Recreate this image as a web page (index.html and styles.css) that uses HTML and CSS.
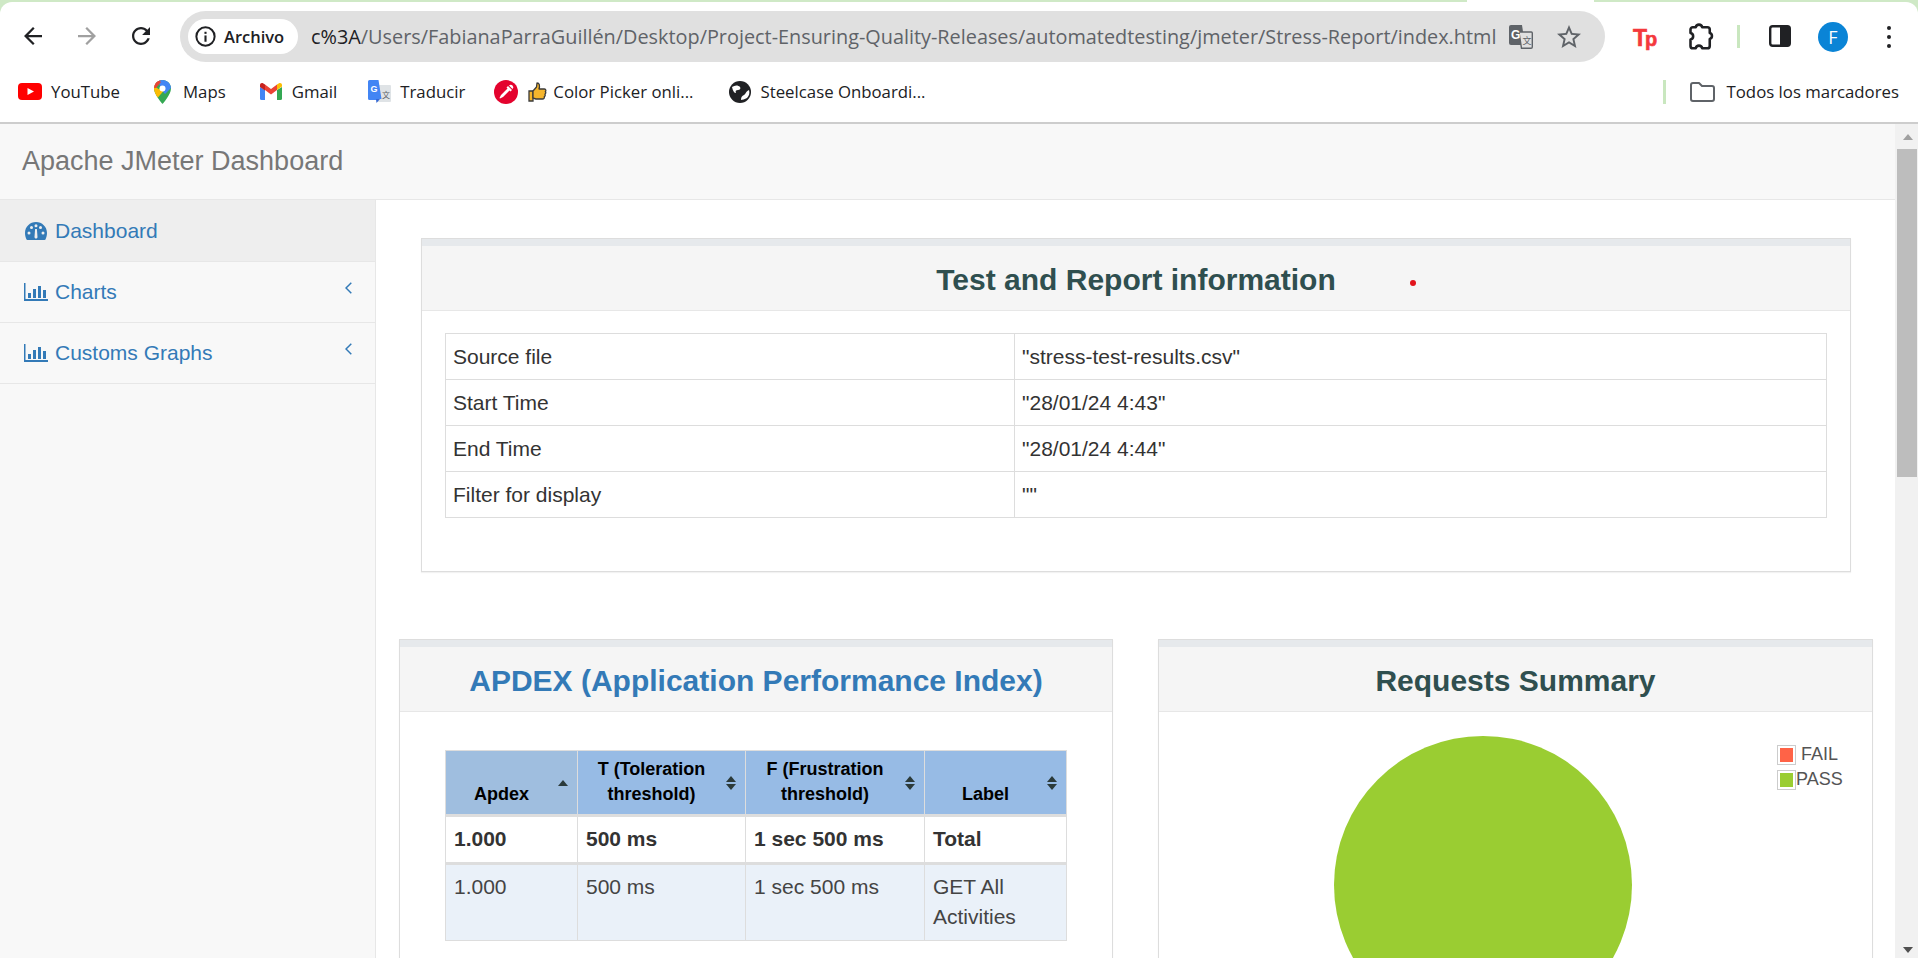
FILE: index.html
```html
<!DOCTYPE html>
<html>
<head>
    <title>Apache JMeter Dashboard</title>
    <link rel="stylesheet" href="styles.css">
</head>
<body>
    <!-- browser frame -->
    <div class="browser">
        <div class="tabstrip">
            <div class="tabstrip-gap"></div>
        </div>
        <div class="toolbar">
            <svg class="nav-icon" viewBox="4 4 16 16"><path fill="#202124" d="M20 11H7.83l5.59-5.59L12 4l-8 8 8 8 1.41-1.41L7.83 13H20v-2z"/></svg>
            <svg class="nav-icon" viewBox="4 4 16 16"><path fill="#a0a0a0" d="M4 11h12.17l-5.59-5.59L12 4l8 8-8 8-1.41-1.41L16.17 13H4v-2z"/></svg>
            <svg class="nav-icon" viewBox="4 4 16 16"><path fill="#202124" d="M17.65 6.35C16.2 4.9 14.21 4 12 4c-4.42 0-7.99 3.58-7.99 8s3.57 8 7.99 8c3.73 0 6.84-2.55 7.73-6h-2.08c-.82 2.33-3.04 4-5.65 4-3.31 0-6-2.69-6-6s2.69-6 6-6c1.66 0 3.14.69 4.22 1.78L13 11h7V4l-2.35 2.35z"/></svg>
            <div class="omnibox">
                <div class="chip">
                    <svg class="chip-icon" viewBox="0 0 20 20"><circle cx="10" cy="10" r="8.7" fill="none" stroke="#202124" stroke-width="1.9"/><rect x="9" y="9" width="2" height="6" fill="#202124"/><rect x="9" y="5.5" width="2" height="2" fill="#202124"/></svg>
                    <span>Archivo</span>
                </div>
                <div class="url"><span class="url-host">c%3A</span>/Users/FabianaParraGuillén/Desktop/Project-Ensuring-Quality-Releases/automatedtesting/jmeter/Stress-Report/index.html</div>
                <svg class="translate-icon" viewBox="0 0 24 24">
                    <path fill="#5f6368" d="M2 0h11l3 20H2a2 2 0 0 1-2-2V2a2 2 0 0 1 2-2z"/>
                    <path fill="#e0e0e0" stroke="#5f6368" stroke-width="1.4" d="M10 7h12.3a1 1 0 0 1 1 1v14a1.3 1.3 0 0 1-1.3 1.3H12.5z"/>
                    <text x="2" y="14" class="translate-g">G</text>
                    <text x="13.5" y="19" class="translate-x">文</text>
                </svg>
                <svg class="star-icon" viewBox="2 2 20 19"><path fill="#5f6368" d="M22 9.24l-7.19-.62L12 2 9.19 8.63 2 9.24l5.46 4.73L5.82 21 12 17.27 18.18 21l-1.63-7.03L22 9.24zM12 15.4l-3.76 2.27 1-4.28-3.32-2.88 4.38-.38L12 6.1l1.71 4.04 4.38.38-3.32 2.88 1 4.28L12 15.4z"/></svg>
            </div>
            <span class="tp-logo">T<span class="tp-p">p</span></span>
            <svg class="puzzle-icon" viewBox="0 0 24 24"><path fill="none" stroke="#202124" stroke-width="2.2" stroke-linejoin="round" d="M5 4.5H7.5a2.8 2.8 0 0 1 5.5 0H17.5a2 2 0 0 1 2 2V9.5a2.600 2.600 0 0 1 0 5V20.5a2 2 0 0 1-2 2H13a2.800 2.800 0 0 0-5.500 0H5a2 2 0 0 1-2-2V15a2.800 2.800 0 0 0 0-5.500V6.500a2 2 0 0 1 2-2z"/></svg>
            <div class="toolbar-sep"></div>
            <svg class="panel-icon" viewBox="0 0 22 22"><rect x="1.2" y="1.2" width="19.6" height="19.6" rx="2.5" fill="none" stroke="#202124" stroke-width="2.4"/><rect x="11" y="1" width="10" height="20" fill="#202124"/></svg>
            <div class="avatar">F</div>
            <div class="menu-dots"><i></i><i></i><i></i></div>
        </div>
        <div class="bookmarks">
            <div class="bookmark bm-youtube">
                <svg class="bm-icon" width="24" height="17" viewBox="0 0 24 17"><rect width="24" height="17" rx="4" fill="#f00"/><path fill="#fff" d="M9.5 5l6.5 3.5-6.5 3.5z"/></svg>
                <span>YouTube</span>
            </div>
            <div class="bookmark bm-maps">
                <svg class="bm-icon" width="17" height="24" viewBox="0 0 17 24">
                    <clipPath id="pin"><path d="M8.5 0C3.8 0 0 3.8 0 8.5c0 6 8.500 15.500 8.500 15.500S17 14.500 17 8.500C17 3.800 13.200 0 8.500 0z"/></clipPath>
                    <g clip-path="url(#pin)">
                        <rect width="17" height="24" fill="#34a853"/>
                        <path fill="#fbbc04" d="M0 6l6 4-4 8-2-3z"/>
                        <path fill="#fbbc04" d="M2 13l4.5-5 3 3-6 7z"/>
                        <path fill="#4285f4" d="M4 0h13v8l-6 6-4-5z"/>
                        <path fill="#ea4335" d="M0 6l7-6-2-1-5 2z"/>
                        <path fill="#ea4335" d="M0 8V3l4-3 3 2-5 6z"/>
                    </g>
                    <circle cx="8.5" cy="8.5" r="3" fill="#fff"/>
                </svg>
                <span>Maps</span>
            </div>
            <div class="bookmark bm-gmail">
                <svg class="bm-icon" width="22" height="17" viewBox="0 0 22 17">
                    <path fill="#4285f4" d="M0 4v11.5A1.5 1.5 0 0 0 1.5 17H5V7z"/>
                    <path fill="#34a853" d="M17 7v10h3.5a1.5 1.5 0 0 0 1.5-1.5V4z"/>
                    <path fill="#ea4335" d="M5 7l6 4.5L17 7V1.5L11 6 5 1.5z"/>
                    <path fill="#c5221f" d="M0 4l5 3.5V1.5L3 .3C1.6-.5 0 .5 0 2z"/>
                    <path fill="#fbbc04" d="M17 1.5V7l5-3.5V2c0-1.5-1.6-2.5-3-1.7z"/>
                </svg>
                <span>Gmail</span>
            </div>
            <div class="bookmark bm-translate">
                <svg class="bm-icon" width="23" height="24" viewBox="0 0 23 24">
                    <rect x="8" y="5" width="15" height="17" rx="1" fill="#dfe3e6"/>
                    <path fill="#4285f4" d="M1.5 0h9l3 19H10l-1 1H1.5A1.5 1.5 0 0 1 0 18.5v-17A1.5 1.5 0 0 1 1.5 0z"/>
                    <path fill="#3367d6" d="M8 19h4l-3.5 4z"/>
                    <text x="2.5" y="12" class="bm-translate-g">G</text>
                    <text x="14" y="18" class="bm-translate-x">文</text>
                </svg>
                <span>Traducir</span>
            </div>
            <div class="bookmark bm-picker">
                <svg class="bm-icon" width="24" height="24" viewBox="0 0 24 24">
                    <circle cx="12" cy="12" r="12" fill="#e4032e"/>
                    <path fill="#fff" d="M14 6l4 4-1.5 1.5-1-1L9 17l-3 1.5-.5-.5L7 15l6.5-6.5-1-1z"/>
                    <path fill="#fff" d="M15 5.5a2 2 0 0 1 3.5 3.5z"/>
                </svg>
                <svg class="bm-thumb" width="19" height="20" viewBox="0 0 19 20">
                    <path fill="#f5b52c" stroke="#3a3a3a" stroke-width="1.3" d="M1 9h4v10H1z"/>
                    <path fill="#f5b52c" stroke="#3a3a3a" stroke-width="1.3" stroke-linejoin="round" d="M5 9l3.5-4 .5-4c2.5 0 3 2.5 2 6h5.5c1.5 0 1.8 2 .8 2.5.8.8.6 2.3-.4 2.7.6.9.3 2.2-.6 2.5.3 1.2-.4 2.3-1.8 2.3H8c-1.5 0-2-1-3-1z"/>
                </svg>
                <span>Color Picker onli...</span>
            </div>
            <div class="bookmark bm-steelcase">
                <svg class="bm-icon" width="22" height="22" viewBox="0 0 22 22">
                    <circle cx="11" cy="11" r="11" fill="#202124"/>
                    <path fill="#fff" d="M3 6c3-2 6-2 8 0 1 1 0 3-2 3-2 0-3 1-2 3-2 0-3-2-4-6z"/>
                    <path fill="#fff" d="M20 9c1 3 0 6-2 8-2 1-5 2-6 2 0-3 1-4 3-5s1-3 5-5z"/>
                </svg>
                <span>Steelcase Onboardi...</span>
            </div>
            <div class="bm-sep"></div>
            <div class="bookmark bm-all">
                <svg class="bm-icon" width="25" height="20" viewBox="0 0 25 20"><path fill="none" stroke="#5f6368" stroke-width="2" stroke-linejoin="round" d="M1 3a2 2 0 0 1 2-2h6l3 3h10a2 2 0 0 1 2 2v11a2 2 0 0 1-2 2H3a2 2 0 0 1-2-2z"/></svg>
                <span>Todos los marcadores</span>
            </div>
        </div>
    </div>

    <div class="viewport">
        <div class="page">
            <div class="navbar">Apache JMeter Dashboard</div>
            <div class="wrapper">
                <div class="sidebar">
                    <div class="side-item active">
                        <svg class="side-icon" width="24" height="18" viewBox="-1 0 24 18"><path fill="#337ab7" fill-rule="evenodd" d="M11 0C5 0 0 4.700 0 11c0 2.500.7 4.800 1.500 6.500.2.300.5.500.9.500h17.200c.4 0 .7-.2.900-.5.800-1.700 1.500-4 1.500-6.500C22 4.700 17 0 11 0zM4 9.500a1.500 1.500 0 1 1 0 3 1.500 1.500 0 0 1 0-3zM6.500 4a1.500 1.500 0 1 1 0 3 1.500 1.500 0 0 1 0-3zM11 2.200a1.500 1.500 0 1 1 0 3 1.500 1.500 0 0 1 0-3zM15.500 4a1.500 1.500 0 1 1 0 3 1.500 1.500 0 0 1 0-3zM18 9.500a1.500 1.500 0 1 1 0 3 1.500 1.500 0 0 1 0-3zM9.500 15l.6-8h1.800l.6 8c0 1-1 1.500-1.500 1.500S9.500 16 9.500 15z"/></svg>
                        <span>Dashboard</span>
                    </div>
                    <div class="side-item">
                        <svg class="side-icon" width="24" height="18" viewBox="0 0 24 18"><path fill="#337ab7" d="M0 0h1.500v16H24v2H0z"/><path fill="#337ab7" d="M4 10h3v5H4zM9 6h3v9H9zM14 3h3v12h-3zM19 7h3v8h-3z"/></svg>
                        <span>Charts</span>
                        <svg class="side-arrow" width="7" height="12" viewBox="0 0 7 12"><path fill="none" stroke="#337ab7" stroke-width="1.5" d="M6.300.7L1 6l5.300 5.300"/></svg>
                    </div>
                    <div class="side-item">
                        <svg class="side-icon" width="24" height="18" viewBox="0 0 24 18"><path fill="#337ab7" d="M0 0h1.500v16H24v2H0z"/><path fill="#337ab7" d="M4 10h3v5H4zM9 6h3v9H9zM14 3h3v12h-3zM19 7h3v8h-3z"/></svg>
                        <span>Customs Graphs</span>
                        <svg class="side-arrow" width="7" height="12" viewBox="0 0 7 12"><path fill="none" stroke="#337ab7" stroke-width="1.5" d="M6.300.7L1 6l5.300 5.300"/></svg>
                    </div>
                </div>
                <div class="content">
                    <div class="panel panel-info">
                        <div class="panel-heading">
                            Test and Report information
                            <span class="red-dot"></span>
                        </div>
                        <div class="panel-body info-body">
                            <table class="info-table">
                                <tr><td class="info-key">Source file</td><td>"stress-test-results.csv"</td></tr>
                                <tr><td class="info-key">Start Time</td><td>"28/01/24 4:43"</td></tr>
                                <tr><td class="info-key">End Time</td><td>"28/01/24 4:44"</td></tr>
                                <tr><td class="info-key">Filter for display</td><td>""</td></tr>
                            </table>
                        </div>
                    </div>
                    <div class="panel-row">
                        <div class="panel">
                            <div class="panel-heading heading-link">APDEX (Application Performance Index)</div>
                            <div class="panel-body apdex-body">
                                <table class="apdex-table">
                                    <thead>
                                        <tr>
                                            <th class="col-apdex sort-up">Apdex</th>
                                            <th class="col-t sort-both">T (Toleration threshold)</th>
                                            <th class="col-f sort-both">F (Frustration threshold)</th>
                                            <th class="col-label sort-both">Label</th>
                                        </tr>
                                    </thead>
                                    <tbody>
                                        <tr class="row-total">
                                            <td>1.000</td><td>500 ms</td><td>1 sec 500 ms</td><td>Total</td>
                                        </tr>
                                        <tr class="row-item">
                                            <td>1.000</td><td>500 ms</td><td>1 sec 500 ms</td><td>GET All Activities</td>
                                        </tr>
                                    </tbody>
                                </table>
                            </div>
                        </div>
                        <div class="panel">
                            <div class="panel-heading">Requests Summary</div>
                            <div class="panel-body pie-body">
                                <div class="pie"></div>
                                <div class="legend">
                                    <div class="legend-row"><span class="swatch"><i class="swatch-fail"></i></span><span class="legend-fail">FAIL</span></div>
                                    <div class="legend-row"><span class="swatch"><i class="swatch-pass"></i></span><span>PASS</span></div>
                                </div>
                            </div>
                        </div>
                    </div>
                </div>
            </div>
        </div>
        <div class="scrollbar">
            <div class="scroll-up"></div>
            <div class="scroll-thumb"></div>
            <div class="scroll-track"></div>
            <div class="scroll-down"></div>
        </div>
    </div>
</body>
</html>
```
FILE: styles.css
```css
* {
    box-sizing: border-box;
}
html, body {
    height: 100%;
}
body {
    margin: 0;
    height: 958px;
    overflow: hidden;
    display: flex;
    flex-direction: column;
    font-family: "Liberation Sans", Arial, sans-serif;
    font-size: 21px;
    color: #333;
    background-color: #fff;
}

/* browser frame */
.browser {
    flex: none;
    height: 124px;
    background-color: #cfe9c6;
    border-bottom: 2px solid #cdcdcd;
    font-family: "Open Sans", sans-serif;
}
.tabstrip {
    height: 2px;
    padding-left: 1467px;
}
.tabstrip-gap {
    width: 127px;
    height: 2px;
    background-color: #fff;
}
.toolbar {
    height: 63px;
    padding-top: 9px;
    padding-left: 24px;
    background-color: #fff;
    border-radius: 12px 12px 0 0;
    display: flex;
    align-items: flex-start;
}
.nav-icon {
    width: 18px;
    height: 18px;
    margin-top: 16px;
    margin-right: 36px;
    flex: none;
}
.omnibox {
    width: 1425px;
    height: 51px;
    margin-left: -6px;
    padding-left: 8px;
    background-color: #e0e0e0;
    border-radius: 26px;
    display: flex;
    align-items: center;
    flex: none;
}
.chip {
    width: 110px;
    height: 35px;
    padding-left: 7px;
    background-color: #fff;
    border-radius: 18px;
    display: flex;
    align-items: center;
    font-size: 16.5px;
    font-weight: 600;
    color: #202124;
    flex: none;
}
.chip-icon {
    width: 21px;
    height: 21px;
    margin-right: 8px;
    flex: none;
}
.url {
    width: 1198px;
    margin-left: 13px;
    font-size: 19.85px;
    color: #5f6368;
    white-space: nowrap;
    flex: none;
}
.url-host {
    color: #202124;
}
.translate-icon {
    width: 24px;
    height: 24px;
    flex: none;
}
.translate-g {
    font-family: "Liberation Sans", sans-serif;
    font-size: 12px;
    font-weight: bold;
    fill: #fff;
}
.translate-x {
    font-family: "Noto Sans CJK SC", sans-serif;
    font-size: 9px;
    fill: #5f6368;
}
.star-icon {
    width: 24px;
    height: 23px;
    margin-left: 24px;
    flex: none;
}
.tp-logo {
    width: 24px;
    margin-left: 28px;
    margin-top: 13px;
    font-family: "Liberation Sans", sans-serif;
    font-size: 23px;
    font-weight: bold;
    line-height: 28px;
    letter-spacing: -2px;
    color: #f4393c;
    -webkit-text-stroke: 0.6px #f4393c;
    flex: none;
}
.tp-p {
    font-size: 20px;
}
.puzzle-icon {
    width: 28px;
    height: 28px;
    margin-left: 30px;
    margin-top: 11px;
    flex: none;
}
.toolbar-sep {
    width: 3px;
    height: 23px;
    margin-left: 22px;
    margin-top: 14px;
    background-color: #c9e7bf;
    flex: none;
}
.panel-icon {
    width: 22px;
    height: 22px;
    margin-left: 29px;
    margin-top: 14px;
    flex: none;
}
.avatar {
    width: 30px;
    height: 30px;
    margin-left: 27px;
    margin-top: 11px;
    background-color: #0a84d6;
    border-radius: 50%;
    color: #fff;
    font-size: 18px;
    line-height: 30px;
    text-align: center;
    flex: none;
}
.menu-dots {
    margin-left: 39px;
    margin-top: 15px;
    display: flex;
    flex-direction: column;
    gap: 5px;
    flex: none;
}
.menu-dots i {
    display: block;
    width: 4px;
    height: 4px;
    background-color: #202124;
    border-radius: 50%;
}
.bookmarks {
    height: 57px;
    padding-bottom: 4px;
    padding-left: 18px;
    background-color: #fff;
    display: flex;
    align-items: center;
    font-size: 16.8px;
    color: #202124;
}
.bookmark {
    display: flex;
    align-items: center;
    white-space: nowrap;
    flex: none;
}
.bm-icon, .bm-thumb {
    flex: none;
}
.bm-youtube .bm-icon {
    margin-right: 9px;
}
.bm-maps {
    margin-left: 34px;
}
.bm-maps .bm-icon {
    margin-right: 12px;
}
.bm-gmail {
    margin-left: 34px;
}
.bm-gmail .bm-icon {
    margin-right: 10px;
}
.bm-translate {
    margin-left: 31px;
}
.bm-translate .bm-icon {
    margin-right: 9px;
}
.bm-translate-g {
    font-family: "Liberation Sans", sans-serif;
    font-size: 9px;
    font-weight: bold;
    fill: #fff;
}
.bm-translate-x {
    font-family: "Noto Sans CJK SC", sans-serif;
    font-size: 8px;
    fill: #5f6368;
}
.bm-picker {
    margin-left: 29px;
}
.bm-picker .bm-icon {
    margin-right: 10px;
}
.bm-thumb {
    margin-right: 6px;
}
.bm-steelcase {
    margin-left: 35px;
}
.bm-steelcase .bm-icon {
    margin-right: 10px;
}
.bm-sep {
    width: 3px;
    height: 24px;
    margin-left: auto;
    background-color: #c9e7bf;
    flex: none;
}
.bm-all {
    margin-left: 24px;
    margin-right: 19px;
}
.bm-all .bm-icon {
    margin-right: 12px;
}

/* page */
.viewport {
    flex: 1;
    display: flex;
    min-height: 0;
}
.page {
    flex: 1;
    min-width: 0;
    display: flex;
    flex-direction: column;
    overflow: hidden;
}
.navbar {
    flex: none;
    height: 76px;
    padding-left: 22px;
    background-color: #f8f8f8;
    border-bottom: 1px solid #e7e7e7;
    font-size: 27px;
    line-height: 75px;
    color: #777;
}
.wrapper {
    flex: 1;
    display: flex;
    min-height: 0;
}
.sidebar {
    width: 376px;
    flex: none;
    background-color: #f8f8f8;
    border-right: 1px solid #e7e7e7;
}
.side-item {
    height: 61px;
    padding-left: 24px;
    padding-right: 23px;
    border-bottom: 1px solid #e7e7e7;
    display: flex;
    align-items: center;
    color: #337ab7;
}
.side-item.active {
    height: 62px;
    background-color: #eee;
}
.side-icon {
    margin-right: 7px;
    flex: none;
}
.side-arrow {
    margin-left: auto;
    margin-top: -8px;
}
.content {
    flex: 1;
    min-width: 0;
    padding: 38px 22px 0 23px;
    overflow: hidden;
}
.panel {
    background-color: #fff;
    border: 1px solid #ddd;
    box-shadow: 0 1px 1px rgba(0, 0, 0, 0.05);
}
.panel-info {
    margin: 0 22px 67px 22px;
    height: 334px;
}
.panel-heading {
    height: 72px;
    padding-top: 4px;
    background-color: #f5f5f5;
    border-top: 7px solid #e6e9ec;
    border-bottom: 1px solid #e7e7e7;
    font-size: 30px;
    font-weight: bold;
    line-height: 59px;
    text-align: center;
    color: #2f4f4f;
    position: relative;
}
.heading-link {
    color: #337ab7;
}
.red-dot {
    position: absolute;
    left: 988px;
    top: 34px;
    width: 6px;
    height: 6px;
    background-color: #e2141c;
    border-radius: 50%;
}
.info-body {
    padding: 22px 23px 0 23px;
}
.info-table {
    width: 100%;
    border-collapse: collapse;
}
.info-table td {
    height: 46px;
    padding: 0 7px;
    border: 1px solid #ddd;
}
.info-key {
    width: 569px;
}
.panel-row {
    display: grid;
    grid-template-columns: 714px 715px;
    gap: 45px;
}
.apdex-body {
    padding: 38px 45px 0 45px;
    height: 400px;
}
.apdex-table {
    width: 622px;
    table-layout: fixed;
    border-collapse: collapse;
}
.apdex-table th {
    height: 65px;
    padding: 0 28px 7px 8px;
    background-color: #97bbe5;
    border: 1px solid #ddd;
    border-bottom: 3px solid #ddd;
    font-size: 18px;
    line-height: 25px;
    color: #000;
    text-align: center;
    vertical-align: bottom;
    position: relative;
}
.apdex-table th.col-apdex {
    background-color: #9fbedf;
}
.col-apdex {
    width: 132px;
}
.col-t {
    width: 168px;
}
.col-f {
    width: 179px;
}
.sort-up::after {
    content: "";
    position: absolute;
    right: 9px;
    top: 29px;
    border: 5.5px solid transparent;
    border-top: 0;
    border-bottom: 6px solid #2b3a3a;
}
.sort-both::before {
    content: "";
    position: absolute;
    right: 9px;
    top: 25px;
    border: 5.5px solid transparent;
    border-top: 0;
    border-bottom: 6px solid #2b3a3a;
}
.sort-both::after {
    content: "";
    position: absolute;
    right: 9px;
    top: 33px;
    border: 5.5px solid transparent;
    border-bottom: 0;
    border-top: 6px solid #2b3a3a;
}
.apdex-table td {
    padding: 7px 8px 8px 8px;
    border: 1px solid #ddd;
    vertical-align: top;
    line-height: 30px;
}
.row-total td {
    border-bottom: 3px solid #ddd;
    font-weight: bold;
}
.row-item td {
    background-color: #eaf1f9;
    color: #444;
}
.pie-body {
    position: relative;
    height: 400px;
    padding-top: 24px;
    padding-left: 175px;
}
.pie {
    width: 298px;
    height: 298px;
    background-color: #9acd32;
    border-radius: 50%;
}
.legend {
    position: absolute;
    left: 618px;
    top: 30px;
    font-size: 18px;
    line-height: 25px;
    color: #545454;
}
.legend-row {
    display: flex;
    align-items: center;
}
.swatch {
    width: 19px;
    height: 20px;
    padding: 2px;
    border: 1px solid #ccc;
    flex: none;
}
.swatch i {
    display: block;
    height: 100%;
}
.swatch-fail {
    background-color: #ff6347;
}
.swatch-pass {
    background-color: #9acd32;
}
.legend-fail {
    margin-left: 5px;
}

/* scrollbar */
.scrollbar {
    width: 23px;
    flex: none;
    background-color: #f1f1f1;
    display: flex;
    flex-direction: column;
    align-items: center;
}
.scroll-up {
    width: 0;
    height: 0;
    margin-top: 10px;
    margin-bottom: 9px;
    margin-left: 2px;
    border: 5.5px solid transparent;
    border-top: 0;
    border-bottom: 6px solid #a0a0a0;
}
.scroll-thumb {
    width: 20px;
    height: 328px;
    margin-left: 1px;
    background-color: #bdbdbd;
}
.scroll-track {
    flex: 1;
}
.scroll-down {
    width: 0;
    height: 0;
    margin-bottom: 5px;
    margin-left: 2px;
    border: 5.5px solid transparent;
    border-bottom: 0;
    border-top: 6px solid #505050;
}
```
